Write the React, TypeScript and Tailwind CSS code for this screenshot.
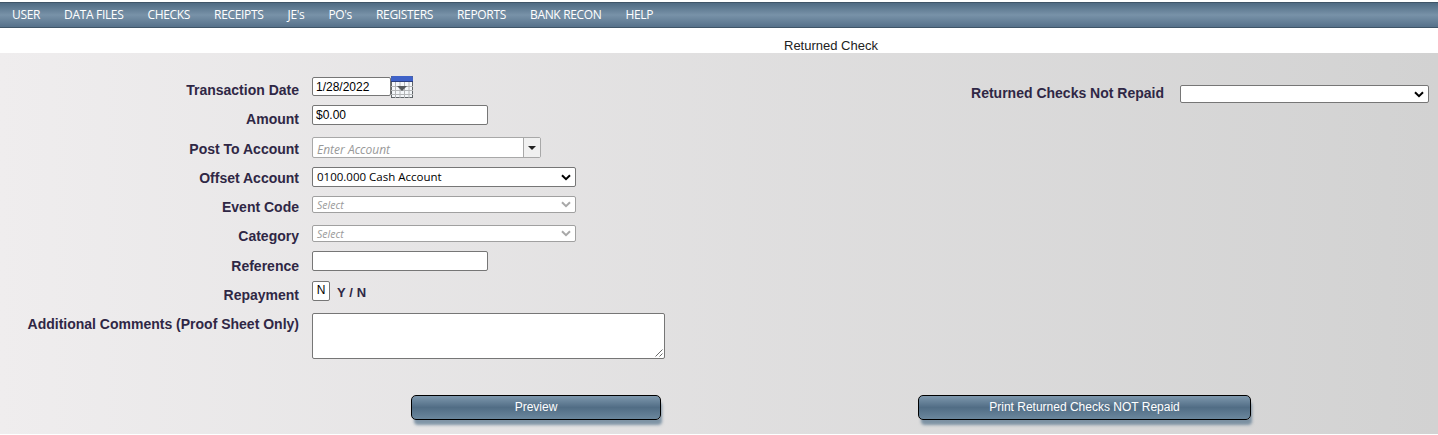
import React from "react";

const NAV_ITEMS = ["USER", "DATA FILES", "CHECKS", "RECEIPTS", "JE's", "PO's", "REGISTERS", "REPORTS", "BANK RECON", "HELP"];

const labelClass = "w-[299px] shrink-0 text-right text-[14px] font-bold leading-4 text-[#2f2745]";
const boxClass = "bg-white border border-[#767676] rounded-[2px] box-border";
const inputText = "text-[12px] text-black";

function Chevron({ muted }: { muted?: boolean }) {
  return (
    <svg width="10" height="7" viewBox="0 0 10 7" className="block shrink-0">
      <path d="M1 1.200L5 5.200L9 1.200" fill="none" stroke={muted ? "#a8a8a8" : "#000000"} strokeWidth="2" />
    </svg>
  );
}

function CalendarIcon() {
  return (
    <svg width="22" height="22" viewBox="0 0 22 22" className="block shrink-0">
      <rect x="0.5" y="0.5" width="21" height="21" fill="#f4f7fa" stroke="#5f6468" />
      <path d="M4.500 6v16M9 6v16M13.500 6v16M18 6v16M0 10.500h22M0 14.500h22M0 18.500h22" stroke="#b4b6b8" />
      <path d="M0 2a2 2 0 0 1 2-2h18a2 2 0 0 1 2 2v4H0z" fill="#3f62c8" />
      <path d="M0 5.500h22" stroke="#2b3f80" />
      <path d="M6 10h10l-5 5z" fill="#55595d" />
    </svg>
  );
}

function FakeSelect({ text, muted }: { text: string; muted?: boolean }) {
  return (
    <div
      className={`${boxClass} w-[264px] flex items-center justify-between pl-1 pr-[4px] ${
        muted ? "h-[17px] border-[#a0a0a0]" : "h-[20px]"
      }`}
    >
      <span
        className={
          muted
            ? "font-['Open_Sans',sans-serif] text-[10.500px] leading-[15px] pt-[2px] italic text-[#9a9a9a]"
            : "font-['Open_Sans',sans-serif] text-[11.500px] text-black"
        }
      >
        {text}
      </span>
      <Chevron muted={muted} />
    </div>
  );
}

function Button({ text, width }: { text: string; width: string }) {
  return (
    <button
      className={`${width} h-[25px] pb-[2px] rounded-[5px] border border-black bg-gradient-to-b from-[#7e98ad] via-[#516d85] to-[#6b879d] text-center text-[12px] text-white shadow-[2px_6px_3px_-1px_rgba(85,115,140,0.7)]`}
    >
      {text}
    </button>
  );
}

export default function App() {
  return (
    <div className="w-[1438px] h-[435px] bg-white font-['Liberation_Sans',Arial,sans-serif] overflow-hidden">
      {/* Top menu */}
      <div className="mt-[2px] h-[26px] border-y border-[#3f5568] bg-gradient-to-b from-[#4f6b83] via-[#7892a8] to-[#56718a] flex items-center pl-3 gap-6 font-['Open_Sans',sans-serif] text-[12px] tracking-[-0.33px] text-white">
        {NAV_ITEMS.map((item) => (
          <span key={item}>{item}</span>
        ))}
      </div>

      {/* Page title */}
      <div className="h-[23px] pt-[11px] pl-[784px] text-[13px] leading-[14px] text-[#222]">Returned Check</div>

      {/* Form panel */}
      <div className="mt-[2px] h-[381px] bg-gradient-to-r from-[#efedee] to-[#d2d2d2]">
        <div className="flex h-[320px]">
          {/* Left column */}
          <div className="w-[920px] shrink-0 pt-[23px]">
            <div className="flex gap-[13px] h-[29px]">
              <div className={`${labelClass} pt-[6px]`}>Transaction Date</div>
              <div className="flex items-start">
                <div className={`${boxClass} ${inputText} w-[79px] h-[19px] mt-[1px] pl-[3px] leading-[19px]`}>1/28/2022</div>
                <CalendarIcon />
              </div>
            </div>
            <div className="flex gap-[13px] h-[32px]">
              <div className={`${labelClass} pt-[6px]`}>Amount</div>
              <div className={`${boxClass} ${inputText} w-[176px] h-[20px] pl-[3px] leading-[18px]`}>$0.00</div>
            </div>
            <div className="flex gap-[13px] h-[30px]">
              <div className={`${labelClass} pt-[4px]`}>Post To Account</div>
              <div className="flex w-[229px] h-[21px] bg-white border border-[#a8a8a8] rounded-[2px] box-border">
                <span className="grow pl-1 font-['Open_Sans',sans-serif] text-[12px] italic leading-[24px] text-[#999]">Enter Account</span>
                <span className="w-[17px] border-l border-[#a8a8a8] bg-[#f0f0f0] flex items-center justify-center">
                  <span className="border-x-[4px] border-t-[4px] border-x-transparent border-t-[#222]" />
                </span>
              </div>
            </div>
            <div className="flex gap-[13px] h-[29px]">
              <div className={`${labelClass} pt-[3px]`}>Offset Account</div>
              <FakeSelect text="0100.000 Cash Account" />
            </div>
            <div className="flex gap-[13px] h-[29px]">
              <div className={`${labelClass} pt-[3px]`}>Event Code</div>
              <FakeSelect text="Select" muted />
            </div>
            <div className="flex gap-[13px] h-[26px]">
              <div className={`${labelClass} pt-[3px]`}>Category</div>
              <FakeSelect text="Select" muted />
            </div>
            <div className="flex gap-[13px] h-[30px]">
              <div className={`${labelClass} pt-[7px]`}>Reference</div>
              <div className={`${boxClass} w-[176px] h-[20px]`} />
            </div>
            <div className="flex gap-[13px] h-[32px]">
              <div className={`${labelClass} pt-[6px]`}>Repayment</div>
              <div className="flex items-start gap-[7px]">
                <div className={`${boxClass} ${inputText} w-[18px] h-[20px] text-center leading-[16px] border-[#555]`}>N</div>
                <span className="text-[13px] font-bold leading-[24px] tracking-[0.1px] text-[#2f2745]">Y / N</span>
              </div>
            </div>
            <div className="flex gap-[13px]">
              <div className={`${labelClass} pt-[3px]`}>Additional Comments (Proof Sheet Only)</div>
              <div className={`${boxClass} relative w-[353px] h-[46px]`}>
                <svg width="8" height="8" viewBox="0 0 8 8" className="absolute right-[1px] bottom-[1px]">
                  <path d="M0.500 7.500L7.500 0.500M4.500 7.500L7.500 4.500" stroke="#6a6a6a" />
                </svg>
              </div>
            </div>
          </div>

          {/* Right column */}
          <div className="flex grow pt-[32px] gap-4 items-start">
            <div className="w-[244px] shrink-0 text-right text-[14px] font-bold leading-4 text-[#2f2745]">Returned Checks Not Repaid</div>
            <div className={`${boxClass} w-[249px] h-[18px] flex items-center justify-end pr-[4px]`}>
              <Chevron />
            </div>
          </div>
        </div>

        {/* Actions */}
        <div className="flex pt-[22px] pl-[411px] gap-[257px]">
          <Button text="Preview" width="w-[250px]" />
          <Button text="Print Returned Checks NOT Repaid" width="w-[333px]" />
        </div>
      </div>
    </div>
  );
}
